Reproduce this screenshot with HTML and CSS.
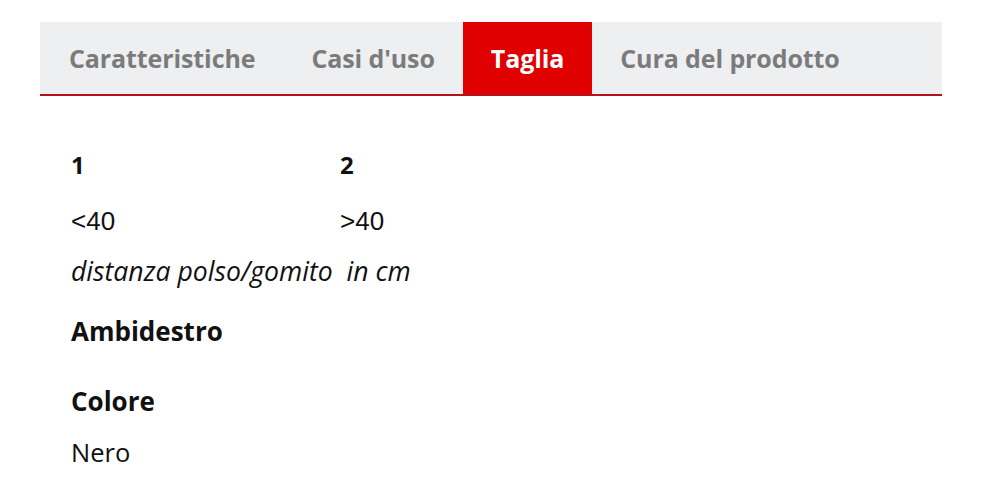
FILE: index.html
```html
<!DOCTYPE html>
<html lang="it">
<head>
<meta charset="UTF-8" />
<meta name="viewport" content="width=device-width, initial-scale=1" />
<title>Taglia</title>
<link rel="stylesheet" href="styles.css">
</head>
<body>
  <div class="product-tabs">
    <ul class="tab-bar">
      <li class="tab">Caratteristiche</li>
      <li class="tab">Casi d'uso</li>
      <li class="tab active">Taglia</li>
      <li class="tab">Cura del prodotto</li>
    </ul>
    <div class="tab-panel">
      <table class="size-table">
        <tr class="size-head">
          <th>1</th>
          <th>2</th>
        </tr>
        <tr>
          <td>&lt;40</td>
          <td>&gt;40</td>
        </tr>
      </table>
      <p class="size-note">distanza polso/gomito  in cm</p>
      <h4 class="attr-title">Ambidestro</h4>
      <h4 class="attr-title short">Colore</h4>
      <p class="attr-value">Nero</p>
    </div>
  </div>
</body>
</html>
```

FILE: styles.css
```css
* {
  box-sizing: border-box;
}
body {
  margin: 0;
  font-family: 'Open Sans', 'Noto Sans', sans-serif;
  background: #fff;
  color: #111;
}
.product-tabs {
  width: 902px;
  margin: 22px 0 0 40px;
}
.tab-bar {
  display: flex;
  list-style: none;
  margin: 0;
  padding: 0 0 0 1px;
  background: #eeeff1;
  border-bottom: 2px solid #b5121b;
}
.tab {
  height: 72px;
  display: flex;
  align-items: center;
  padding: 0 28px;
  font-size: 25px;
  font-weight: 700;
  color: #7b7b7b;
  letter-spacing: -0.1px;
}
.tab.active {
  background: #e00000;
  color: #fff;
}
.tab-panel {
  padding: 52px 31px 0;
}
.size-table {
  border-collapse: collapse;
}
.size-table th,
.size-table td {
  width: 269px;
  padding: 0;
  text-align: left;
  vertical-align: top;
  line-height: 34px;
}
.size-table th {
  font-size: 24px;
  font-weight: 700;
  height: 56px;
}
.size-table td {
  font-family: 'Liberation Sans', Arial, sans-serif;
  font-size: 26px;
  height: 50px;
}
.size-note {
  margin: 0;
  white-space: pre;
  font-style: italic;
  font-size: 26.6px;
  line-height: 34px;
  height: 60px;
}
.attr-title {
  margin: 0;
  font-size: 26px;
  font-weight: 700;
  line-height: 34px;
  height: 70px;
}
.attr-title.short {
  height: 51px;
}
.attr-value {
  margin: 0;
  font-size: 25.5px;
  line-height: 34px;
}
```
